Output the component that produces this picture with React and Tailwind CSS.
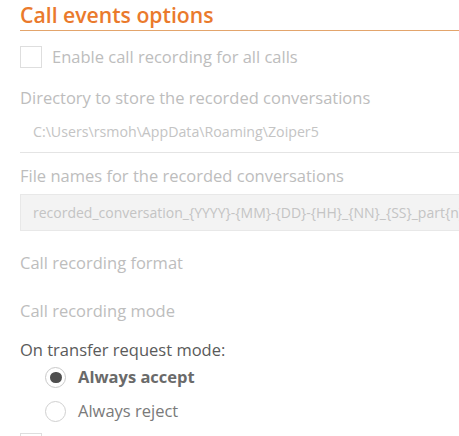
export default function App() {
  return (
    <div
      className="w-[459px] h-[436px] overflow-hidden bg-white pl-5"
      style={{ fontFamily: '"Open Sans", "Noto Sans", sans-serif' }}
    >
      <h1 className="border-b border-[#e3a56c] h-[31px] pt-[1px] text-[21.2px] leading-[28px] font-semibold text-[#ea7a2c] whitespace-nowrap">
        Call events options
      </h1>

      <label className="flex items-center mt-[15px] h-[22px]">
        <span className="w-[22px] h-[22px] border border-[#dedede] bg-white shrink-0" />
        <span className="ml-[10px] text-[16.5px] text-[#bdbdbd] whitespace-nowrap">
          Enable call recording for all calls
        </span>
      </label>

      <div className="mt-[19px] text-[16.5px] leading-[22px] text-[#bdbdbd] whitespace-nowrap">
        Directory to store the recorded conversations
      </div>
      <div className="mt-[2px] border-b border-[#e4e4e4] h-[42px] flex items-center pl-[13px] text-[14.2px] text-[#c4c4c4] whitespace-nowrap">
        C:\Users\rsmoh\AppData\Roaming\Zoiper5
      </div>

      <div className="mt-[12px] text-[16.5px] leading-[22px] text-[#bdbdbd] whitespace-nowrap">
        File names for the recorded conversations
      </div>
      <div className="mt-[7px] h-[37px] bg-[#f3f3f3] border border-[#e8e8e8] border-r-0 flex items-center pl-[12px] text-[14px] text-[#c4c4c4] whitespace-nowrap overflow-hidden">
        recorded_conversation_{'{YYYY}'}-{'{MM}'}-{'{DD}'}-{'{HH}'}_{'{NN}'}_{'{SS}'}_part{'{n}'}
      </div>

      <div className="mt-[21px] text-[16.5px] leading-[22px] text-[#bdbdbd]">
        Call recording format
      </div>
      <div className="mt-[26px] text-[16.5px] leading-[22px] text-[#bdbdbd]">
        Call recording mode
      </div>

      <div className="mt-[17px] text-[16.5px] leading-[22px] text-[#5a5a5a] whitespace-nowrap">
        On transfer request mode:
      </div>

      <div className="pl-[25px] mt-[6px] flex flex-col gap-[13px]">
        <label className="flex items-center h-[21px]">
          <span className="w-[21px] h-[21px] rounded-full border border-[#c9c9c9] bg-white flex items-center justify-center shrink-0">
            <span className="w-[12px] h-[11px] rounded-full bg-[#4f4f4f]" />
          </span>
          <span className="ml-[12px] text-[16.5px] font-bold text-[#6a6a6a] whitespace-nowrap">
            Always accept
          </span>
        </label>
        <label className="flex items-center h-[21px]">
          <span className="w-[21px] h-[21px] rounded-full border border-[#d0d0d0] bg-white shrink-0" />
          <span className="ml-[12px] text-[16.5px] text-[#7a7a7a] whitespace-nowrap">
            Always reject
          </span>
        </label>
      </div>

      <span className="block mt-[11px] w-[22px] h-[22px] border border-[#dedede]" />
    </div>
  );
}
